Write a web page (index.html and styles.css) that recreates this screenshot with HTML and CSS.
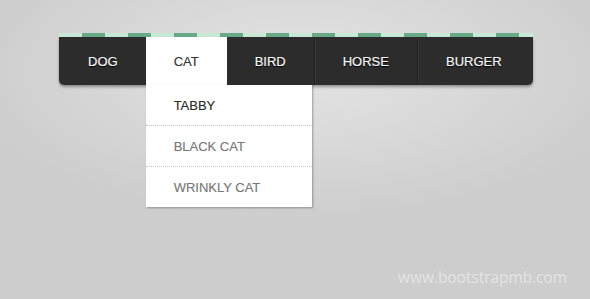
FILE: index.html
```html
<!DOCTYPE html>
<html>
<head>
<meta charset="utf-8">
<link rel="stylesheet" href="styles.css">
</head>
<body>
<div class="page">
  <nav class="menu">
    <div class="stripe"></div>
    <ul class="tabs">
      <li class="tab"><a class="tab-link">DOG</a></li>
      <li class="tab active"><a class="tab-link">CAT</a>
        <ul class="dropdown">
          <li class="drop-item current">TABBY</li>
          <li class="drop-item">BLACK CAT</li>
          <li class="drop-item">WRINKLY CAT</li>
        </ul>
      </li>
      <li class="tab"><a class="tab-link">BIRD</a></li>
      <li class="tab sep"><a class="tab-link">HORSE</a></li>
      <li class="tab sep"><a class="tab-link">BURGER</a></li>
    </ul>
  </nav>
  <div class="watermark">www.bootstrapmb.com</div>
</div>
</body>
</html>
```
FILE: styles.css
```css
html, body {
  margin: 0;
  padding: 0;
}
body {
  width: 590px;
  height: 299px;
  overflow: hidden;
  background: radial-gradient(ellipse 340px 150px at 300px 70px, #e3e3e3 0%, #dadada 45%, #cdcdcd 100%);
  background-color: #cbcbcb;
  font-family: "Liberation Sans", Arial, sans-serif;
}
.page {
  height: 299px;
  display: flex;
  flex-direction: column;
  align-items: flex-start;
  padding: 33px 0 0 59px;
  box-sizing: border-box;
}
.menu {
  display: flex;
  flex-direction: column;
}
.stripe {
  height: 4px;
  background: repeating-linear-gradient(90deg, #c6e8d5 0 23px, #68aa88 23px 46px);
}
.tabs {
  list-style: none;
  margin: 0;
  padding: 0;
  display: flex;
  background: #2c2c2c;
  border-radius: 0 0 5px 5px;
  box-shadow: 0 2px 3px rgba(0, 0, 0, 0.35);
}
.tab {
  position: relative;
}
.tab.sep {
  border-left: 1px solid #222;
  box-shadow: inset 1px 0 0 #363636;
}
.tab-link {
  display: block;
  height: 48px;
  line-height: 49px;
  padding: 0 28px;
  font-size: 13px;
  color: #f6f6f6;
  text-shadow: 0 1px 1px #000;
  -webkit-text-stroke: 0.2px #f6f6f6;
}
.tab:first-child .tab-link {
  padding-left: 29px;
}
.tab:last-child .tab-link {
  padding-right: 31px;
}
.active {
  background: #fff;
}
.active .tab-link {
  color: #333;
  text-shadow: none;
  -webkit-text-stroke: 0.15px #333;
}
.dropdown {
  position: absolute;
  top: 48px;
  left: 0;
  width: 166px;
  margin: 0;
  padding: 0;
  list-style: none;
  background: #fff;
  box-shadow: 1px 1px 2px rgba(0, 0, 0, 0.3);
  z-index: 2;
}
.drop-item {
  height: 40px;
  line-height: 41px;
  padding-left: 28px;
  font-size: 13px;
  color: #777;
  -webkit-text-stroke: 0.15px #777;
}
.drop-item + .drop-item {
  border-top: 1px dotted #c4c4c4;
}
.drop-item.current {
  color: #2a2a2a;
  -webkit-text-stroke: 0.15px #2a2a2a;
}
.watermark {
  margin-top: auto;
  align-self: flex-end;
  margin-right: 23px;
  margin-bottom: 11px;
  font-family: "Open Sans", sans-serif;
  font-size: 15.4px;
  color: #e4e4e4;
}
```
